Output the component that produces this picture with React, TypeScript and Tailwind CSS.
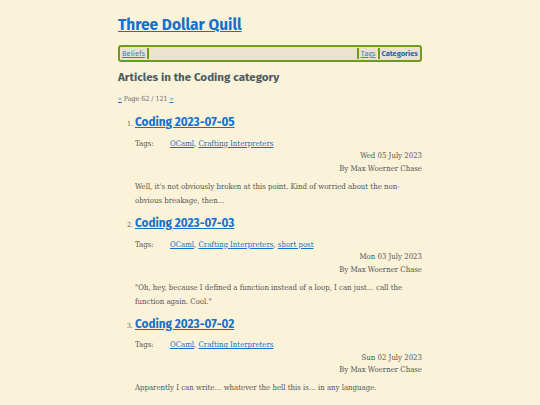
const posts = [
  {
    title: 'Coding 2023-07-05',
    tags: ['OCaml', 'Crafting Interpreters'],
    date: 'Wed 05 July 2023',
    summary: "Well, it's not obviously broken at this point. Kind of worried about the non-obvious breakage, then…",
  },
  {
    title: 'Coding 2023-07-03',
    tags: ['OCaml', 'Crafting Interpreters', 'short post'],
    date: 'Mon 03 July 2023',
    summary: '"Oh, hey, because I defined a function instead of a loop, I can just… call the function again. Cool."',
  },
  {
    title: 'Coding 2023-07-02',
    tags: ['OCaml', 'Crafting Interpreters'],
    date: 'Sun 02 July 2023',
    summary: 'Apparently I can write… whatever the hell this is… in any language.',
  },
];

const heading = { fontFamily: '"Fira Sans", "Open Sans", "Noto Sans", sans-serif' };
const body = { fontFamily: '"DejaVu Serif Condensed", "DejaVu Serif", serif' };

export default function App() {
  return (
    <div className="min-h-[405px] bg-[#fbf2da] text-[#555]" style={body}>
      <div className="mx-auto w-[304px] pt-[14px]">
        <h1 className="text-[15.5px] font-bold leading-[22px]" style={heading}>
          <a href="#" className="text-[#1570c8] underline">Three Dollar Quill</a>
        </h1>

        <nav
          className="mt-[9px] flex h-[17px] items-center rounded-[3px] border-2 border-[#6f9a1f] bg-[#ebe3cf] px-[2px] text-[7.5px]"
          style={heading}
        >
          <a href="#" className="text-[#3d7fc0] underline">Beliefs</a>
          <span className="ml-[2px] h-[11px] w-[2px] bg-[#6f9a1f]" />
          <span className="flex-1" />
          <span className="mr-[2px] h-[11px] w-[2px] bg-[#6f9a1f]" />
          <a href="#" className="text-[#3d7fc0] underline">Tags</a>
          <span className="mx-[2px] h-[11px] w-[2px] bg-[#6f9a1f]" />
          <a href="#" className="font-bold text-[#2a62a8]">Categories</a>
        </nav>

        <h2 className="mt-[7px] text-[11.6px] font-bold leading-[16px] text-[#4b5a5e]" style={heading}>
          Articles in the Coding category
        </h2>

        <p className="mt-[9px] text-[7px] leading-[10px] text-[#666]">
          <a href="#" className="text-[#1570c8] underline">«</a> Page 62 / 121{' '}
          <a href="#" className="text-[#1570c8] underline">»</a>
        </p>

        <ol className="mt-[9px] pl-[17px]">
          {posts.map((p, i) => (
            <li key={p.title} className="mb-[6px]">
              <div className="flex items-baseline">
                <span className="-ml-[8px] w-[8px] text-[7px] text-[#666]">{i + 1}.</span>
                <a href="#" className="text-[11.75px] font-bold leading-[18px] text-[#1570c8] underline" style={heading}>
                  {p.title}
                </a>
              </div>
              <div className="mt-[6.75px] flex text-[7.75px] leading-[12.5px]">
                <span className="w-[35px]">Tags:</span>
                <span>
                  {p.tags.map((t, j) => (
                    <span key={t}>
                      <a href="#" className="text-[#1570c8] underline">{t}</a>
                      {j < p.tags.length - 1 ? ', ' : ''}
                    </span>
                  ))}
                </span>
              </div>
              <div className="text-right text-[7.75px] leading-[12.5px]">
                <div>{p.date}</div>
                <div>By Max Woerner Chase</div>
              </div>
              <p className="mt-[4.5px] text-[7.75px] leading-[14px]">{p.summary}</p>
            </li>
          ))}
        </ol>
      </div>
    </div>
  );
}
